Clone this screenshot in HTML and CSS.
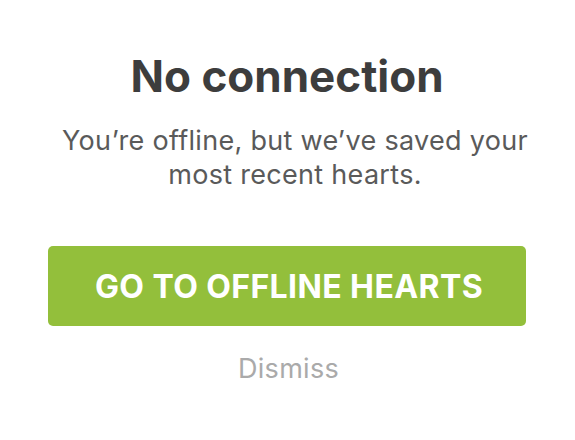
FILE: index.html
```html
<!DOCTYPE html>
<html>
<head>
<meta charset="utf-8">
<link rel="stylesheet" href="styles.css">
</head>
<body>
<div class="dialog">
  <h1 class="title">No connection</h1>
  <p class="message">You’re offline, but we’ve saved your most recent hearts.</p>
  <button class="primary">GO TO OFFLINE HEARTS</button>
  <button class="dismiss">Dismiss</button>
</div>
</body>
</html>
```
FILE: styles.css
```css
html, body {
  margin: 0;
  padding: 0;
  background: #ffffff;
}
.dialog {
  display: flex;
  flex-direction: column;
  align-items: center;
  padding: 52px 49px 0 48px;
  font-family: Inter, "Open Sans", sans-serif;
}
.title {
  margin: 0;
  font-size: 44px;
  line-height: 48px;
  font-weight: 700;
  color: #3d3d3d;
}
.message {
  align-self: stretch;
  margin: 24px -10px 0 6px;
  text-align: center;
  font-size: 27px;
  line-height: 34px;
  letter-spacing: 0.3px;
  color: #5a5a5a;
}
.primary {
  margin-top: 54px;
  width: 100%;
  height: 80px;
  padding: 0 0 0 4px;
  border: none;
  border-radius: 5px;
  background: #93bf3b;
  color: #fff;
  font-family: inherit;
  font-weight: 700;
  font-size: 32px;
  letter-spacing: 0.4px;
}
.dismiss {
  margin-top: 26px;
  border: none;
  background: none;
  padding: 0 0 0 3px;
  font-family: inherit;
  font-size: 27px;
  line-height: 34px;
  letter-spacing: 0.3px;
  color: #aaaaaa;
}
```
